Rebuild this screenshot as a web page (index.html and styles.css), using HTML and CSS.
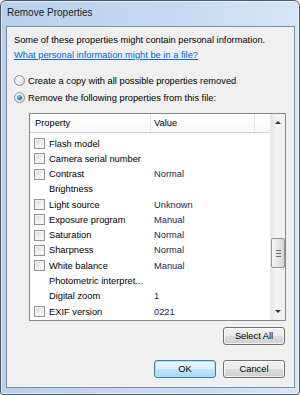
FILE: index.html
```html
<!DOCTYPE html>
<html lang="en">
<head>
  <meta charset="UTF-8">
  <title>Remove Properties</title>
  <link rel="stylesheet" href="styles.css">
</head>
<body>
  <div class="window">
    <div class="titlebar">Remove Properties</div>
    <div class="client">
      <p class="intro">Some of these properties might contain personal information.</p>
      <a class="link" href="#">What personal information might be in a file?</a>
      <label class="radio first"><span class="dot"></span>Create a copy with all possible properties removed</label>
      <label class="radio checked"><span class="dot"></span>Remove the following properties from this file:</label>

      <div class="listbox">
        <div class="list-main">
          <div class="header">
            <span class="col-prop">Property</span>
            <span class="col-val">Value</span>
            <span class="col-rest"></span>
          </div>
          <div class="rows">
            <div class="row"><span class="check"></span><span class="name">Flash model</span><span class="val"></span></div>
            <div class="row"><span class="check"></span><span class="name">Camera serial number</span><span class="val"></span></div>
            <div class="row"><span class="check"></span><span class="name">Contrast</span><span class="val">Normal</span></div>
            <div class="row"><span class="nocheck"></span><span class="name">Brightness</span><span class="val"></span></div>
            <div class="row"><span class="check"></span><span class="name">Light source</span><span class="val">Unknown</span></div>
            <div class="row"><span class="check"></span><span class="name">Exposure program</span><span class="val">Manual</span></div>
            <div class="row"><span class="check"></span><span class="name">Saturation</span><span class="val">Normal</span></div>
            <div class="row"><span class="check"></span><span class="name">Sharpness</span><span class="val">Normal</span></div>
            <div class="row"><span class="check"></span><span class="name">White balance</span><span class="val">Manual</span></div>
            <div class="row"><span class="nocheck"></span><span class="name">Photometric interpret...</span><span class="val"></span></div>
            <div class="row"><span class="nocheck"></span><span class="name">Digital zoom</span><span class="val">1</span></div>
            <div class="row"><span class="check"></span><span class="name">EXIF version</span><span class="val">0221</span></div>
          </div>
        </div>
        <div class="scrollbar">
          <div class="arrow up"></div>
          <div class="track"><div class="thumb"><span class="grip"></span></div></div>
          <div class="arrow down"></div>
        </div>
      </div>

      <div class="select-row"><button class="btn">Select All</button></div>
      <div class="footer">
        <button class="btn default">OK</button>
        <button class="btn">Cancel</button>
      </div>
    </div>
  </div>
</body>
</html>
```

FILE: styles.css
```css
body { margin: 0; background: #fff; font-family: "Liberation Sans", Arial, sans-serif; font-size: 9.3px; color: #000; }
.window { box-sizing: border-box; width: 300px; height: 395px; border: 1px solid #4e5866; border-radius: 6px 6px 3px 3px; background: linear-gradient(90deg, #b8d0ec 0%, #c6daf2 60%, #d7e6f7 100%); box-shadow: inset 0 0 0 1px rgba(255,255,255,0.55); display: flex; flex-direction: column; }
.titlebar { height: 25px; line-height: 24px; padding-left: 6px; font-size: 10px; color: #1b1b1b; }
.client { box-sizing: border-box; height: 362px; margin: 0 4px 0 5px; border: 1px solid #7d8ea4; background: #f0f0f0; padding: 6px 8px 9px 7px; display: flex; flex-direction: column; }

.intro { margin: 0; line-height: 15px; }
.link { display: block; line-height: 15px; color: #0066cc; text-decoration: underline; }

.radio { display: flex; align-items: center; height: 17px; }
.radio.first { margin-top: 9px; }
.dot { box-sizing: border-box; width: 11px; height: 11px; margin: 0 3px 0 0; border: 1px solid #8e8f8f; border-radius: 50%; background: radial-gradient(circle at 40% 35%, #fcfcfc 0%, #e6e6e6 60%, #d4d4d4 100%); position: relative; }
.radio.checked .dot::after { content: ""; position: absolute; left: 2px; top: 2px; width: 5px; height: 5px; border-radius: 50%; background: radial-gradient(circle at 40% 35%, #8ad2ff 0%, #1d74c9 60%, #0b3e78 100%); }

.listbox { box-sizing: border-box; width: 257px; height: 208px; margin: 7px 0 0 15px; border: 1px solid #828790; background: #fff; display: flex; }
.list-main { width: 241px; }
.header { height: 18px; display: flex; border-bottom: 1px solid #d5d5d5; background: linear-gradient(#ffffff, #f7f8fa); line-height: 18px; }
.col-prop { width: 115px; padding-left: 5px; border-right: 1px solid #e0e2e6; }
.col-val { width: 100px; padding-left: 3px; border-right: 1px solid #e0e2e6; }
.col-rest { flex: 1; }
.rows { padding-top: 3px; }
.row { height: 15.27px; display: flex; align-items: center; }
.check, .nocheck { box-sizing: border-box; width: 11px; height: 11px; margin: 0 4px 0 4px; flex: none; }
.check { border: 1px solid #939393; background: linear-gradient(135deg, #d9d9d9 0%, #eeeeee 50%, #fdfdfd 100%); box-shadow: inset 0 0 0 1px #f4f4f4; }
.name { width: 102px; white-space: nowrap; overflow: hidden; }
.val { padding-left: 3px; color: #142850; }

.scrollbar { width: 14px; display: flex; flex-direction: column; background: linear-gradient(90deg, #e5e5e5, #f4f4f4 40%, #f0f0f0); border-left: 1px solid #ececec; }
.arrow { height: 17px; display: flex; align-items: center; justify-content: center; }
.arrow.up::before { content: ""; border: 3px solid transparent; border-top: 0; border-bottom: 3px solid #333; }
.arrow.down::before { content: ""; border: 3px solid transparent; border-bottom: 0; border-top: 3px solid #333; }
.track { flex: 1; padding-top: 107px; }
.thumb { box-sizing: border-box; height: 30px; border: 1px solid #959595; border-radius: 2px; background: linear-gradient(90deg, #f4f4f4, #e6e6e6 50%, #d6d6d6); display: flex; align-items: center; justify-content: center; }
.grip { width: 5px; height: 5px; border-top: 1px solid #6f6f6f; border-bottom: 1px solid #6f6f6f; position: relative; }
.grip::after { content: ""; position: absolute; left: 0; right: 0; top: 2px; border-top: 1px solid #6f6f6f; }

.select-row { display: flex; justify-content: flex-end; margin-top: 6px; padding-right: 1px; }
.footer { display: flex; justify-content: flex-end; gap: 7px; margin-top: 15px; padding-right: 1px; }
.btn { box-sizing: border-box; width: 62px; height: 18px; padding: 0; font: inherit; color: #000; border: 1px solid #707070; border-radius: 3px; background: linear-gradient(#f2f2f2 0%, #ebebeb 50%, #dddddd 51%, #cfcfcf 100%); box-shadow: inset 0 0 0 1px rgba(255,255,255,0.7); }
.btn.default { border-color: #3c7fb1; background: linear-gradient(#eaf6fd 0%, #d9f0fc 50%, #bee6fd 51%, #a7d9f5 100%); box-shadow: inset 0 0 0 1px #9ee4fb; }
```
